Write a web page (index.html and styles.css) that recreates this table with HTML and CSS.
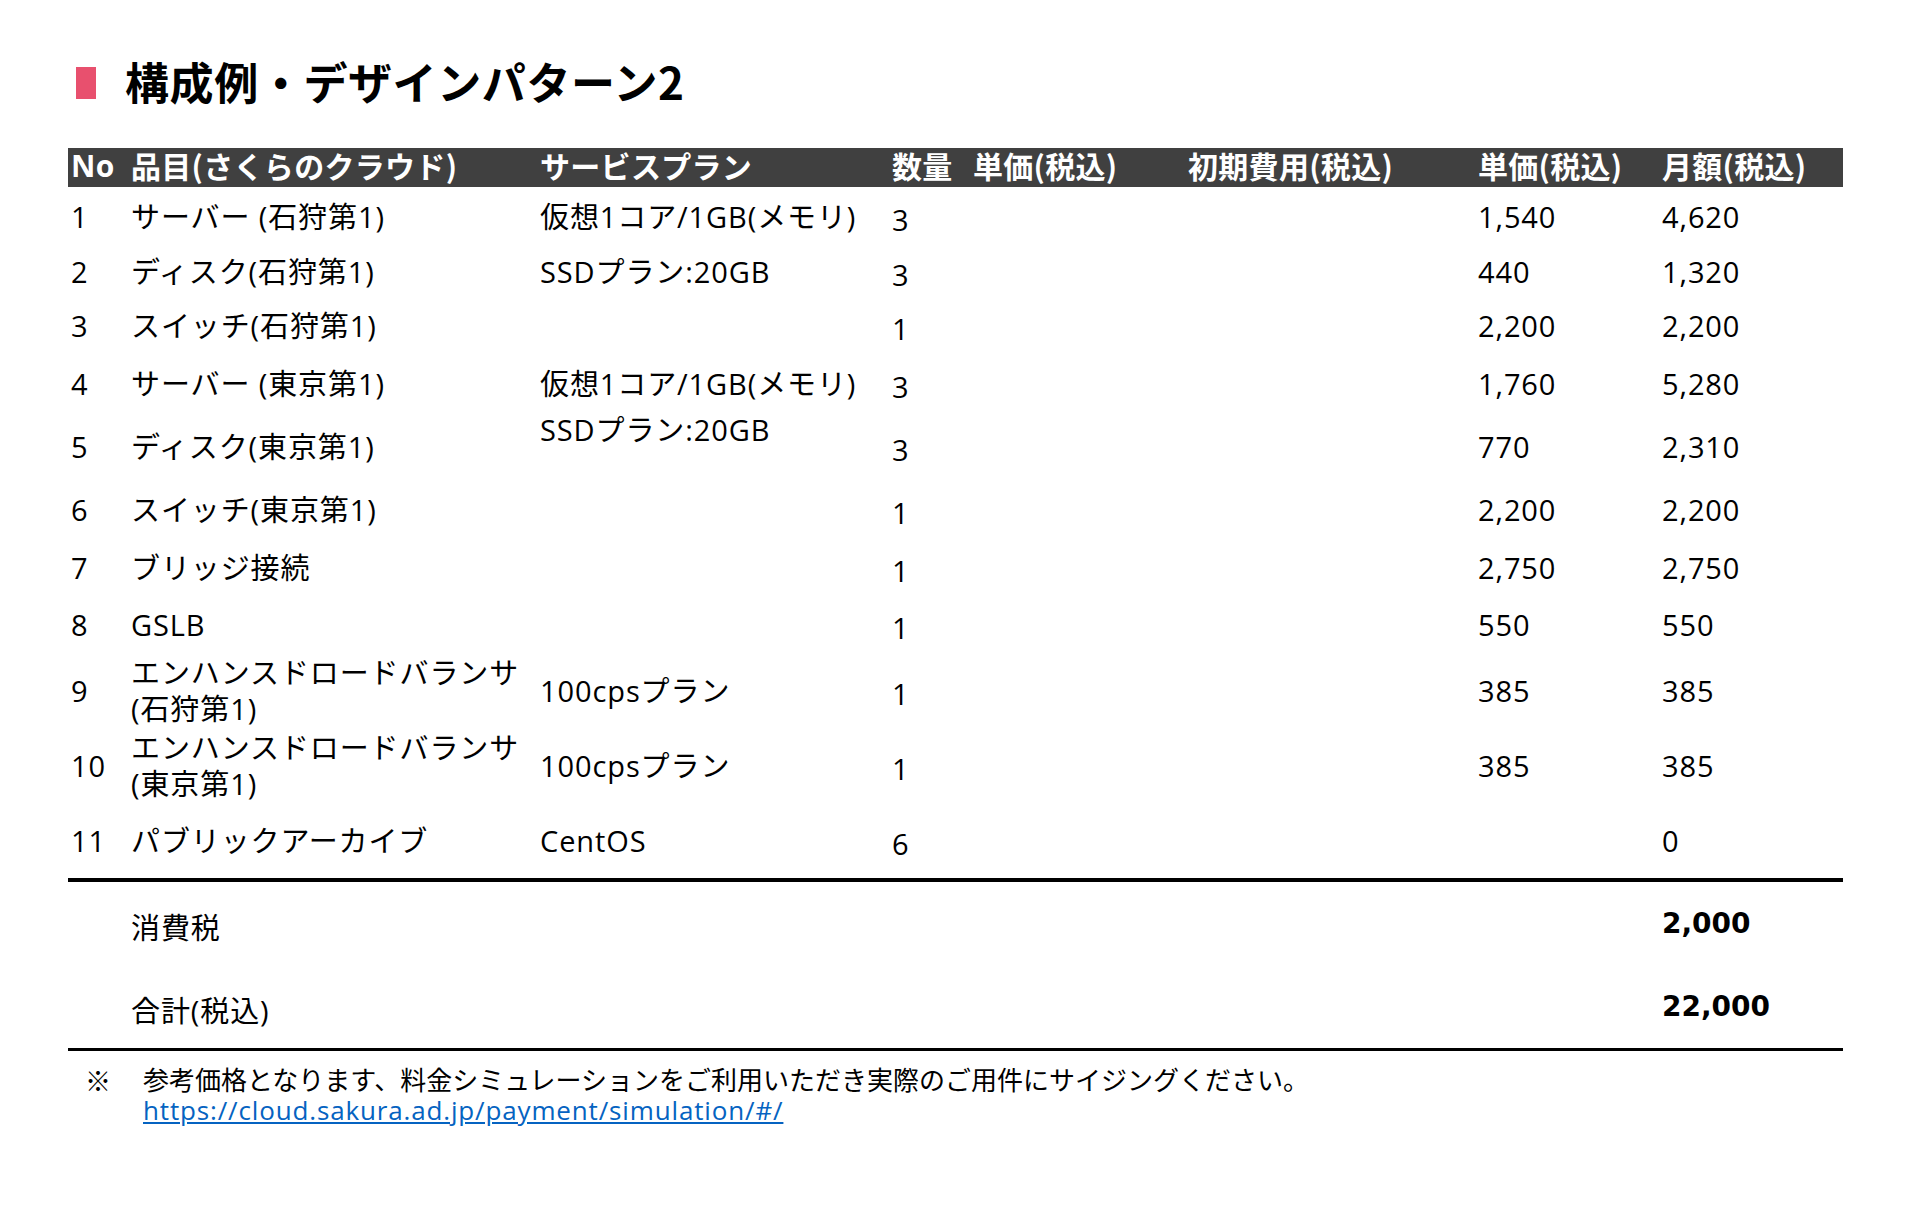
FILE: index.html
```html
<!DOCTYPE html>
<html lang="ja">
<head>
<meta charset="utf-8">
<title>構成例・デザインパターン2</title>
<link rel="stylesheet" href="styles.css">
</head>
<body>
<div class="slide">
  <h1 class="title"><span class="mark"></span><span class="title-text">構成例・デザインパターン2</span></h1>

  <div class="table">
    <div class="row head">
      <div class="cell">No</div>
      <div class="cell">品目(さくらのクラウド)</div>
      <div class="cell">サービスプラン</div>
      <div class="cell">数量</div>
      <div class="cell">単価(税込)</div>
      <div class="cell">初期費用(税込)</div>
      <div class="cell">単価(税込)</div>
      <div class="cell">月額(税込)</div>
    </div>

    <div class="tbody">
      <div class="row r1">
        <div class="cell">1</div>
        <div class="cell">サーバー (石狩第1)</div>
        <div class="cell">仮想1コア/1GB(メモリ)</div>
        <div class="cell qty">3</div>
        <div class="cell"></div>
        <div class="cell"></div>
        <div class="cell">1,540</div>
        <div class="cell">4,620</div>
      </div>
      <div class="row r2">
        <div class="cell">2</div>
        <div class="cell">ディスク(石狩第1)</div>
        <div class="cell">SSDプラン:20GB</div>
        <div class="cell qty">3</div>
        <div class="cell"></div>
        <div class="cell"></div>
        <div class="cell">440</div>
        <div class="cell">1,320</div>
      </div>
      <div class="row r3">
        <div class="cell">3</div>
        <div class="cell">スイッチ(石狩第1)</div>
        <div class="cell"></div>
        <div class="cell qty">1</div>
        <div class="cell"></div>
        <div class="cell"></div>
        <div class="cell">2,200</div>
        <div class="cell">2,200</div>
      </div>
      <div class="row r4">
        <div class="cell">4</div>
        <div class="cell">サーバー (東京第1)</div>
        <div class="cell">仮想1コア/1GB(メモリ)</div>
        <div class="cell qty">3</div>
        <div class="cell"></div>
        <div class="cell"></div>
        <div class="cell">1,760</div>
        <div class="cell">5,280</div>
      </div>
      <div class="row r5">
        <div class="cell">5</div>
        <div class="cell">ディスク(東京第1)</div>
        <div class="cell top">SSDプラン:20GB</div>
        <div class="cell qty">3</div>
        <div class="cell"></div>
        <div class="cell"></div>
        <div class="cell">770</div>
        <div class="cell">2,310</div>
      </div>
      <div class="row r6">
        <div class="cell">6</div>
        <div class="cell">スイッチ(東京第1)</div>
        <div class="cell"></div>
        <div class="cell qty">1</div>
        <div class="cell"></div>
        <div class="cell"></div>
        <div class="cell">2,200</div>
        <div class="cell">2,200</div>
      </div>
      <div class="row r7">
        <div class="cell">7</div>
        <div class="cell">ブリッジ接続</div>
        <div class="cell"></div>
        <div class="cell qty">1</div>
        <div class="cell"></div>
        <div class="cell"></div>
        <div class="cell">2,750</div>
        <div class="cell">2,750</div>
      </div>
      <div class="row r8">
        <div class="cell">8</div>
        <div class="cell">GSLB</div>
        <div class="cell"></div>
        <div class="cell qty">1</div>
        <div class="cell"></div>
        <div class="cell"></div>
        <div class="cell">550</div>
        <div class="cell">550</div>
      </div>
      <div class="row r9">
        <div class="cell">9</div>
        <div class="cell two">エンハンスドロードバランサ<br>(石狩第1)</div>
        <div class="cell">100cpsプラン</div>
        <div class="cell qty">1</div>
        <div class="cell"></div>
        <div class="cell"></div>
        <div class="cell">385</div>
        <div class="cell">385</div>
      </div>
      <div class="row r10">
        <div class="cell">10</div>
        <div class="cell two">エンハンスドロードバランサ<br>(東京第1)</div>
        <div class="cell">100cpsプラン</div>
        <div class="cell qty">1</div>
        <div class="cell"></div>
        <div class="cell"></div>
        <div class="cell">385</div>
        <div class="cell">385</div>
      </div>
      <div class="row r11">
        <div class="cell">11</div>
        <div class="cell">パブリックアーカイブ</div>
        <div class="cell">CentOS</div>
        <div class="cell qty">6</div>
        <div class="cell"></div>
        <div class="cell"></div>
        <div class="cell"></div>
        <div class="cell">0</div>
      </div>
    </div>

    <div class="totals">
      <div class="row trow">
        <div class="cell"></div>
        <div class="cell label">消費税</div>
        <div class="cell value">2,000</div>
      </div>
      <div class="row trow">
        <div class="cell"></div>
        <div class="cell label">合計(税込)</div>
        <div class="cell value">22,000</div>
      </div>
    </div>
  </div>

  <div class="note">
    <span class="note-mark">※</span>
    <div class="note-body">
      <div class="note-text">参考価格となります、料金シミュレーションをご利用いただき実際のご用件にサイジングください。</div>
      <a class="note-link" href="https://cloud.sakura.ad.jp/payment/simulation/#/">https://cloud.sakura.ad.jp/payment/simulation/#/</a>
    </div>
  </div>
</div>
</body>
</html>
```

FILE: styles.css
```css
html, body {
  margin: 0;
  padding: 0;
  background: #ffffff;
}

body {
  font-family: "Open Sans", "Noto Sans CJK JP", sans-serif;
  color: #000000;
}

.slide {
  width: 1920px;
  height: 1212px;
  box-sizing: border-box;
  padding: 51px 77px 0 68px;
}

/* Title */
.title {
  display: flex;
  align-items: center;
  height: 64px;
  margin: 0;
  font-family: "Noto Sans CJK JP", sans-serif;
  font-size: 44px;
  font-weight: 700;
  line-height: 1;
  letter-spacing: 0.6px;
}

.mark {
  display: block;
  width: 20px;
  height: 32px;
  margin-left: 8px;
  margin-right: 29px;
  background: #e8506e;
}

.title-text {
  padding-bottom: 4px;
}

/* Table */
.table {
  margin-top: 33px;
}

.row {
  display: grid;
  grid-template-columns: 60px 409px 352px 81px 215px 290px 184px 1fr;
  align-items: center;
  padding-left: 3px;
  font-size: 29px;
  line-height: 32px;
  letter-spacing: 0.9px;
  white-space: nowrap;
}

.head {
  box-sizing: border-box;
  height: 39px;
  padding-bottom: 4px;
  background: #404040;
  color: #ffffff;
  font-weight: 700;
  font-size: 30px;
  font-family: "Noto Sans CJK JP", sans-serif;
  line-height: 35px;
  letter-spacing: 0.3px;
}

.head .cell:first-child {
  font-family: "Open Sans", sans-serif;
}

.tbody {
  padding-top: 2px;
}

.cell {
  min-width: 0;
}

.qty {
  padding-top: 6px;
}

.top {
  align-self: start;
}

.two {
  line-height: 36px;
}

.r1 { height: 55px; }
.r2 { height: 55px; }
.r3 { height: 54px; }
.r4 { height: 61px; }
.r5 { height: 66px; }
.r6 { height: 60px; }
.r7 { height: 56px; }
.r8 { height: 58px; }
.r9 { height: 74px; }
.r10 { height: 76px; }
.r11 { height: 74px; }

/* Totals */
.totals {
  border-top: 4px solid #000000;
  border-bottom: 3px solid #000000;
}

.trow {
  grid-template-columns: 60px 1534px 1fr;
  height: 83px;
}

.label {
  padding-top: 8px;
}

.value {
  margin-left: -3px;
  font-family: "DejaVu Sans", sans-serif;
  font-weight: 700;
  font-size: 28px;
  letter-spacing: 0;
}

/* Note */
.note {
  display: flex;
  margin-top: 14px;
  padding-left: 17px;
  font-size: 26px;
}

.note-mark {
  width: 58px;
  line-height: 30px;
  font-family: "Noto Sans CJK JP", sans-serif;
}

.note-body {
  display: flex;
  flex-direction: column;
  white-space: nowrap;
}

.note-text {
  height: 30px;
  line-height: 30px;
}

.note-link {
  height: 30px;
  line-height: 30px;
  color: #0563c1;
  text-decoration: underline;
  letter-spacing: 0.85px;
}
```
